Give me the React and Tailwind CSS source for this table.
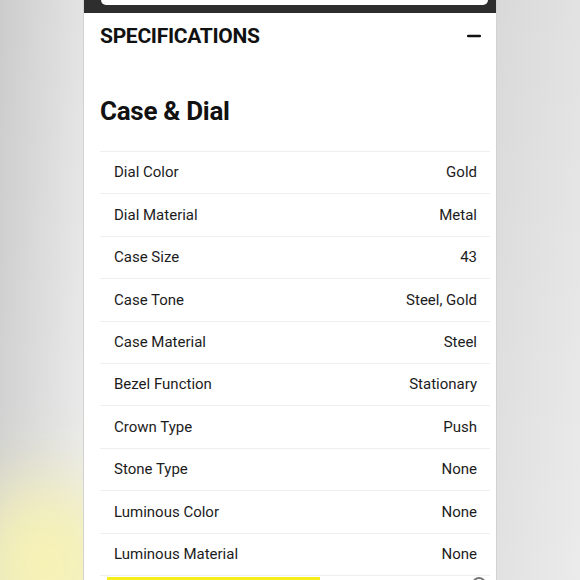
import { Minus } from "lucide-react";

const specs = [
  ["Dial Color", "Gold"],
  ["Dial Material", "Metal"],
  ["Case Size", "43"],
  ["Case Tone", "Steel, Gold"],
  ["Case Material", "Steel"],
  ["Bezel Function", "Stationary"],
  ["Crown Type", "Push"],
  ["Stone Type", "None"],
  ["Luminous Color", "None"],
  ["Luminous Material", "None"],
];

export default function App() {
  return (
    <div className="relative h-[580px] w-[580px] overflow-hidden bg-[linear-gradient(90deg,#d4d4d4_0%,#ececec_14%,#f2f2f2_50%,#e2e2e2_86%,#ebebeb_100%)] font-['Roboto',sans-serif]">
      {/* soft top shading + yellow glow, bottom left */}
      <div className="absolute inset-0 bg-gradient-to-b from-[#0000000a] to-transparent" />
      <div className="absolute -bottom-[70px] -left-[30px] h-[170px] w-[150px] rounded-full bg-[#f6f2b4] blur-[35px]" />

      <div className="relative mx-auto flex h-full w-[414px] flex-col border-x border-[#d2d2d2] bg-white">
        {/* top dark bar with search pill */}
        <div className="h-[13px] shrink-0 bg-[#2e2e2e] pl-[17px] pr-[8px]">
          <div className="h-[5px] rounded-b-[9px] bg-white" />
        </div>

        {/* accordion header */}
        <div className="flex items-center justify-between pl-[16px] pr-[12px] pt-[9px]">
          <h2 className="text-[21px] font-bold leading-[28px] tracking-[-0.3px] text-[#111]">
            SPECIFICATIONS
          </h2>
          <Minus size={20} strokeWidth={3} className="text-[#111]" />
        </div>

        <h3 className="mt-[45px] pl-[16px] text-[26px] font-bold leading-[32px] tracking-[-0.3px] text-[#111]">
          Case &amp; Dial
        </h3>

        <div className="mt-[24px] ml-[16px] mr-[6px]">
          {specs.map(([k, v]) => (
            <div
              key={k}
              className="flex h-[42.4px] items-center justify-between border-t border-[#eeeeee] pl-[14px] pr-[13px] text-[15px] text-[#1c1c1c]"
            >
              <span>{k}</span>
              <span>{v}</span>
            </div>
          ))}
          <div className="flex items-start justify-between border-t border-[#eeeeee] pl-[7px] pr-[4px] pt-[1px]">
            <div className="h-[6px] w-[213px] bg-[#f6ee1c]" />
            <div className="h-[14px] w-[14px] rounded-full border-2 border-[#777]" />
          </div>
        </div>
      </div>
    </div>
  );
}
